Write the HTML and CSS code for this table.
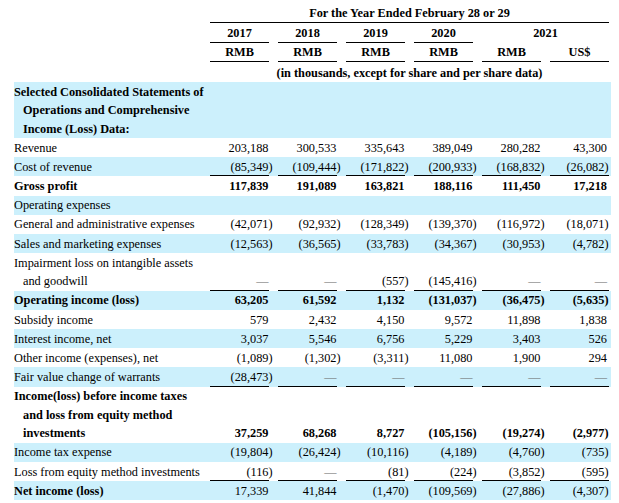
FILE: index.html
```html
<!DOCTYPE html>
<html lang="en">
<head>
<meta charset="utf-8">
<title>Selected Consolidated Financial Data</title>
<link rel="stylesheet" href="styles.css">
</head>
<body>
<div class="sheet">
  <div class="hrow h1"><div></div><div class="all rule">For the Year Ended February 28 or 29</div></div>
  <div class="hrow h2"><div></div><div class="rule">2017</div><div class="rule">2018</div><div class="rule">2019</div><div class="rule">2020</div><div class="two">2021</div></div>
  <div class="hrow h3"><div></div><div class="rule">RMB</div><div class="rule">RMB</div><div class="rule">RMB</div><div class="rule">RMB</div><div class="rule">RMB</div><div class="rule">US$</div></div>
  <div class="hrow h4"><div></div><div class="all">(in thousands, except for share and per share data)</div></div>

  <div class="row blue b"><div class="label">Selected Consolidated Statements of<br>Operations and Comprehensive<br>Income (Loss) Data:</div></div>

  <div class="row"><div class="label">Revenue</div><div class="n">203,188</div><div class="n">300,533</div><div class="n">335,643</div><div class="n">389,049</div><div class="n">280,282</div><div class="n">43,300</div></div>

  <div class="row blue u"><div class="label">Cost of revenue</div><div class="n">(85,349<span class="p">)</span></div><div class="n">(109,444<span class="p">)</span></div><div class="n">(171,822<span class="p">)</span></div><div class="n">(200,933<span class="p">)</span></div><div class="n">(168,832<span class="p">)</span></div><div class="n">(26,082<span class="p">)</span></div></div>

  <div class="row b"><div class="label">Gross profit</div><div class="n">117,839</div><div class="n">191,089</div><div class="n">163,821</div><div class="n">188,116</div><div class="n">111,450</div><div class="n">17,218</div></div>

  <div class="row blue"><div class="label">Operating expenses</div></div>

  <div class="row"><div class="label">General and administrative expenses</div><div class="n">(42,071<span class="p">)</span></div><div class="n">(92,932<span class="p">)</span></div><div class="n">(128,349<span class="p">)</span></div><div class="n">(139,370<span class="p">)</span></div><div class="n">(116,972<span class="p">)</span></div><div class="n">(18,071<span class="p">)</span></div></div>

  <div class="row blue"><div class="label">Sales and marketing expenses</div><div class="n">(12,563<span class="p">)</span></div><div class="n">(36,565<span class="p">)</span></div><div class="n">(33,783<span class="p">)</span></div><div class="n">(34,367<span class="p">)</span></div><div class="n">(30,953<span class="p">)</span></div><div class="n">(4,782<span class="p">)</span></div></div>

  <div class="row u"><div class="label">Impairment loss on intangible assets<br>and goodwill</div><div class="n dash">—</div><div class="n dash">—</div><div class="n">(557<span class="p">)</span></div><div class="n">(145,416<span class="p">)</span></div><div class="n dash">—</div><div class="n dash">—</div></div>

  <div class="row blue b"><div class="label">Operating income (loss)</div><div class="n">63,205</div><div class="n">61,592</div><div class="n">1,132</div><div class="n">(131,037<span class="p">)</span></div><div class="n">(36,475<span class="p">)</span></div><div class="n">(5,635<span class="p">)</span></div></div>

  <div class="row"><div class="label">Subsidy income</div><div class="n">579</div><div class="n">2,432</div><div class="n">4,150</div><div class="n">9,572</div><div class="n">11,898</div><div class="n">1,838</div></div>

  <div class="row blue"><div class="label">Interest income, net</div><div class="n">3,037</div><div class="n">5,546</div><div class="n">6,756</div><div class="n">5,229</div><div class="n">3,403</div><div class="n">526</div></div>

  <div class="row"><div class="label">Other income (expenses), net</div><div class="n">(1,089<span class="p">)</span></div><div class="n">(1,302<span class="p">)</span></div><div class="n">(3,311<span class="p">)</span></div><div class="n">11,080</div><div class="n">1,900</div><div class="n">294</div></div>

  <div class="row blue u"><div class="label">Fair value change of warrants</div><div class="n">(28,473<span class="p">)</span></div><div class="n dash">—</div><div class="n dash">—</div><div class="n dash">—</div><div class="n dash">—</div><div class="n dash">—</div></div>

  <div class="row b"><div class="label">Income(loss) before income taxes<br>and loss from equity method<br>investments</div><div class="n">37,259</div><div class="n">68,268</div><div class="n">8,727</div><div class="n">(105,156<span class="p">)</span></div><div class="n">(19,274<span class="p">)</span></div><div class="n">(2,977<span class="p">)</span></div></div>

  <div class="row blue"><div class="label">Income tax expense</div><div class="n">(19,804<span class="p">)</span></div><div class="n">(26,424<span class="p">)</span></div><div class="n">(10,116<span class="p">)</span></div><div class="n">(4,189<span class="p">)</span></div><div class="n">(4,760<span class="p">)</span></div><div class="n">(735<span class="p">)</span></div></div>

  <div class="row u"><div class="label">Loss from equity method investments</div><div class="n">(116<span class="p">)</span></div><div class="n dash">—</div><div class="n">(81<span class="p">)</span></div><div class="n">(224<span class="p">)</span></div><div class="n">(3,852<span class="p">)</span></div><div class="n">(595<span class="p">)</span></div></div>

  <div class="row blue"><div class="label b">Net income (loss)</div><div class="n">17,339</div><div class="n">41,844</div><div class="n">(1,470<span class="p">)</span></div><div class="n">(109,569<span class="p">)</span></div><div class="n">(27,886<span class="p">)</span></div><div class="n">(4,307<span class="p">)</span></div></div>
</div>
</body>
</html>
```

FILE: styles.css
```css
html, body {
  margin: 0;
  padding: 0;
  background: #fff;
}

body {
  font-family: "Liberation Serif", "Times New Roman", serif;
  font-size: 12.3px;
  color: #000;
}

.sheet {
  padding: 4px 0 0 14px;
  width: 597px;
}

.hrow,
.row {
  display: grid;
  grid-template-columns: 187px repeat(6, 59px);
  column-gap: 9px;
  padding-right: 2px;
}

/* header */
.hrow {
  font-weight: bold;
  text-align: center;
  line-height: 18px;
}

.hrow .all {
  grid-column: 2 / 8;
}

.hrow .two {
  grid-column: 6 / 8;
}

.rule {
  border-bottom: 1px solid #000;
}

.h1 > div { height: 18px; }
.h2 > div { height: 19px; line-height: 20px; }
.h3 > div { height: 18px; line-height: 19px; }
.h4 > div { height: 20px; line-height: 22px; }

/* body rows */
.row {
  align-items: end;
  line-height: 18.43px;
}

.blue {
  background: #ccf0fc;
}

.b {
  font-weight: bold;
}

.label {
  white-space: nowrap;
  padding-top: 0.74px;
  padding-left: 9px;
  text-indent: -9px;
}

.n {
  text-align: right;
  white-space: nowrap;
  padding-right: 0.5px;
}

.n .p {
  margin-right: -0.333em;
}

.n:nth-child(7) {
  padding-right: 2px;
}

.n:nth-child(7) .p {
  margin-right: -1.5px;
}

.u .n {
  box-shadow: inset 0 -1px 0 #000;
}

.dash {
  color: #666;
}
```
